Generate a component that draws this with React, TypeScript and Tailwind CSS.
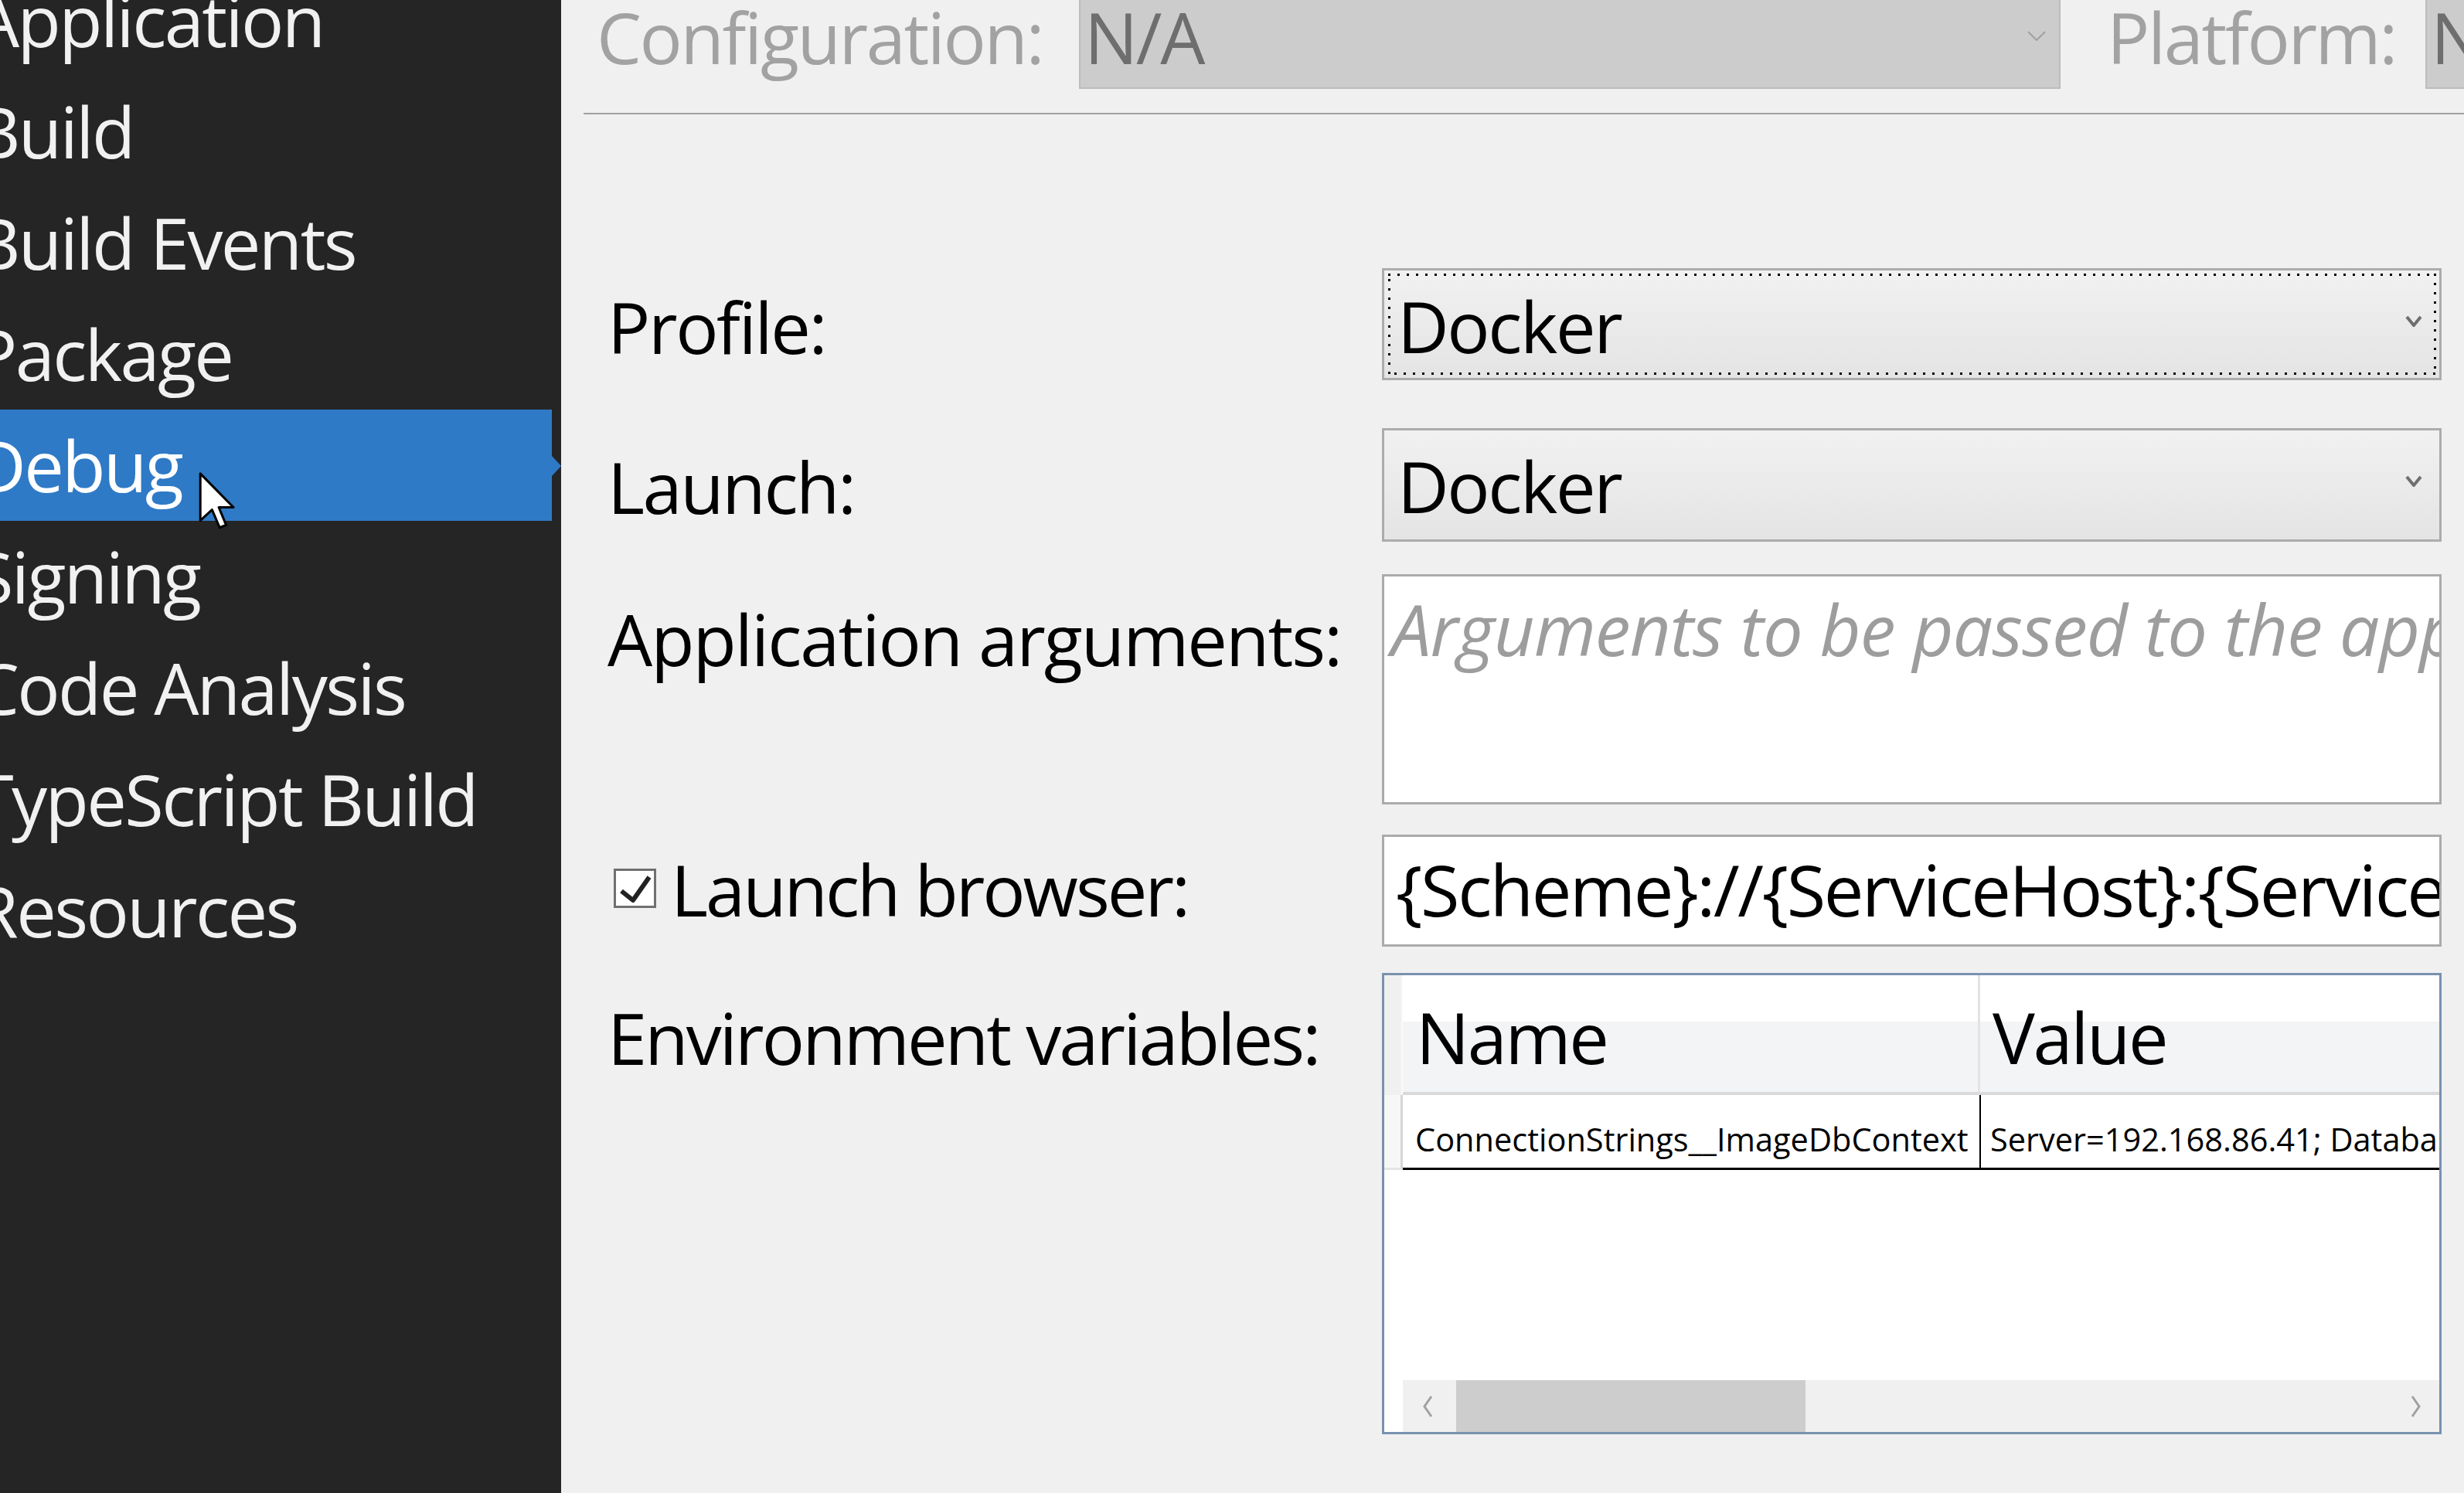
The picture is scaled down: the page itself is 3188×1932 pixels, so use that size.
import React from "react";

const items = [
  "Application",
  "Build",
  "Build Events",
  "Package",
  "Debug",
  "Signing",
  "Code Analysis",
  "TypeScript Build",
  "Resources",
];

function Chevron({
  color = "#707070",
  w = 22,
  h = 15,
  sw = 4,
}: {
  color?: string;
  w?: number;
  h?: number;
  sw?: number;
}) {
  return (
    <svg width={w} height={h} viewBox={`0 0 ${w} ${h}`} className="block shrink-0">
      <polyline
        points={`${sw / 2},${sw / 2} ${w / 2},${h - sw / 2} ${w - sw / 2},${sw / 2}`}
        fill="none"
        stroke={color}
        strokeWidth={sw}
      />
    </svg>
  );
}

function Combo({ text, focused }: { text: string; focused?: boolean }) {
  return (
    <div className="relative h-full border-[3px] border-[#acacac] bg-linear-to-b from-[#f1f1f1] to-[#e4e4e4] flex items-start">
      <div className="pl-[17px] pt-[3px] leading-[138px] whitespace-nowrap">{text}</div>
      <div className="ml-auto mr-[22px] mt-[58px]">
        <Chevron color="#6e6e6e" w={22} h={15} sw={4} />
      </div>
      {focused && (
        <div className="absolute left-[5px] top-[4px] right-[4px] bottom-[4px] pointer-events-none">
          <svg className="block w-full h-full">
            <rect
              x="0"
              y="0"
              width="100%"
              height="100%"
              fill="none"
              stroke="#000"
              strokeWidth="6"
              strokeDasharray="3 9"
            />
          </svg>
        </div>
      )}
    </div>
  );
}

export default function App() {
  return (
    <div className="relative w-[3188px] h-[1932px] overflow-hidden flex bg-[#f0f0f0] font-['Open_Sans','Noto_Sans',sans-serif] text-[92px] tracking-[-2.4px]">
      {/* Sidebar */}
      <aside className="w-[726px] shrink-0 h-full bg-[#252526] overflow-hidden tracking-[-2.6px]">
        <div className="mt-[-46px]">
          {items.map((it) =>
            it === "Debug" ? (
              <div key={it} className="flex h-[144px]">
                <div className="w-[714px] h-full bg-[#2f7ac6] text-white leading-[144px] whitespace-nowrap">
                  <div className="ml-[-33px]">{it}</div>
                </div>
                <svg width="12" height="144" className="block shrink-0">
                  <polygon points="0,60 12,73 0,86" fill="#2f7ac6" />
                </svg>
              </div>
            ) : (
              <div key={it} className="h-[144px] leading-[144px] text-[#f1f1f1] whitespace-nowrap">
                <div className="ml-[-33px]">{it}</div>
              </div>
            )
          )}
        </div>
      </aside>

      {/* Main panel */}
      <main className="flex-1 min-w-0 h-full flex flex-col overflow-hidden text-black">
        {/* Top configuration bar */}
        <div className="flex h-[115px] shrink-0">
          <div className="w-[670px] shrink-0 pl-[46px] leading-[95px] text-[#a2a2a2] whitespace-nowrap">
            Configuration:
          </div>
          <div className="w-[1270px] shrink-0 h-full bg-[#cccccc] border-x-2 border-b-2 border-[#bcbcbc] flex items-start">
            <div className="pl-[5px] leading-[95px] text-[#6e6e6e]">N/A</div>
            <div className="ml-auto mr-[17px] mt-[40px]">
              <Chevron color="#a0a0a0" w={24} h={13} sw={2} />
            </div>
          </div>
          <div className="w-[472px] shrink-0 pl-[60px] leading-[95px] text-[#a2a2a2] whitespace-nowrap">
            Platform:
          </div>
          <div className="flex-1 h-full bg-[#cccccc] border-l-2 border-b-2 border-[#bcbcbc] pl-[5px] leading-[95px] text-[#6e6e6e] whitespace-nowrap overflow-hidden">
            N/A
          </div>
        </div>

        {/* Separator */}
        <div className="ml-[29px] mt-[31px] h-[2px] bg-[#a0a0a0] shrink-0" />

        {/* Form */}
        <div className="pl-[60px] pr-[29px] flex flex-col">
          {/* Profile */}
          <div className="flex mt-[199px] h-[145px]">
            <div className="w-[1002px] shrink-0 leading-[151px] whitespace-nowrap">Profile:</div>
            <div className="flex-1 min-w-0">
              <Combo text="Docker" focused />
            </div>
          </div>

          {/* Launch */}
          <div className="flex mt-[62px] h-[147px]">
            <div className="w-[1002px] shrink-0 leading-[151px] whitespace-nowrap">Launch:</div>
            <div className="flex-1 min-w-0">
              <Combo text="Docker" />
            </div>
          </div>

          {/* Application arguments */}
          <div className="flex mt-[42px] h-[298px]">
            <div className="w-[1002px] shrink-0 leading-[167px] whitespace-nowrap tracking-[-2px]">
              Application arguments:
            </div>
            <div className="flex-1 min-w-0 h-full border-[3px] border-[#ababab] bg-white overflow-hidden">
              <div className="pl-[9px] leading-[135px] italic tracking-[-1px] text-[#9d9d9d] whitespace-nowrap">
                Arguments to be passed to the application
              </div>
            </div>
          </div>

          {/* Launch browser */}
          <div className="flex mt-[39px] h-[145px]">
            <div className="w-[1002px] shrink-0 flex items-start whitespace-nowrap">
              <div className="ml-[8px] mt-[44px] w-[55px] h-[51px] shrink-0 border-[3px] border-[#707070] bg-white">
                <svg width="49" height="45" viewBox="0 0 49 45" className="block">
                  <polyline
                    points="7,26 22,38 43,8"
                    fill="none"
                    stroke="#222"
                    strokeWidth="6"
                    strokeLinejoin="round"
                  />
                </svg>
              </div>
              <div className="ml-[19px] leading-[141px] tracking-[-3px]">Launch browser:</div>
            </div>
            <div className="flex-1 min-w-0 h-full border-[3px] border-[#ababab] bg-white overflow-hidden">
              <div className="pl-[15px] leading-[135px] whitespace-nowrap">
                {"{Scheme}://{ServiceHost}:{ServicePort}"}
              </div>
            </div>
          </div>

          {/* Environment variables */}
          <div className="flex mt-[34px] h-[597px]">
            <div className="w-[1002px] shrink-0 leading-[167px] whitespace-nowrap tracking-[-2.9px]">
              Environment variables:
            </div>
            <div className="flex-1 min-w-0 h-full border-[3px] border-[#7891ae] bg-white flex flex-col overflow-hidden">
              {/* header */}
              <div className="flex h-[155px] shrink-0">
                <div className="w-[24px] shrink-0 bg-[#f0f0f0] border-r-2 border-[#fafafa]" />
                <div className="w-[747px] shrink-0 border-r-[3px] border-[#e3e3e3] border-b-[4px] border-b-[#d9d9d9] bg-linear-to-b from-white from-40% to-[#f3f4f6] to-40% pl-[17px] pt-[10px] leading-[140px] whitespace-nowrap">
                  Name
                </div>
                <div className="flex-1 min-w-0 border-b-[4px] border-[#d9d9d9] bg-linear-to-b from-white from-40% to-[#f3f4f6] to-40% pl-[16px] pt-[10px] leading-[140px] whitespace-nowrap overflow-hidden">
                  Value
                </div>
              </div>
              {/* data row */}
              <div className="flex h-[97px] shrink-0 text-[41.5px] tracking-[0px]">
                <div className="w-[24px] shrink-0 bg-[#f7f7f7] border-r-[3px] border-[#d6d6d6] border-b-[3px] border-b-[#e4e4e4]" />
                <div className="w-[748px] shrink-0 border-r-2 border-black border-b-[3px] pl-[16px] pt-[22px] leading-[70px] whitespace-nowrap overflow-hidden">
                  ConnectionStrings__ImageDbContext
                </div>
                <div className="flex-1 min-w-0 border-b-[3px] border-black pl-[12px] pt-[22px] leading-[70px] whitespace-nowrap overflow-hidden">
                  Server=192.168.86.41; Database=ImageDb; User=sa; Password=Pass@word
                </div>
              </div>
              <div className="flex-1" />
              {/* horizontal scrollbar */}
              <div className="flex h-[67px] shrink-0">
                <div className="w-[24px] shrink-0 bg-white" />
                <div className="flex-1 min-w-0 bg-[#f0f0f0] flex items-stretch">
                  <div className="w-[69px] shrink-0 flex items-center pl-[25px]">
                    <svg width="14" height="28" viewBox="0 0 14 28" className="block">
                      <polyline points="12,1 3,14 12,27" fill="none" stroke="#a0a0a0" strokeWidth="3" />
                    </svg>
                  </div>
                  <div className="w-[452px] shrink-0 bg-[#cdcdcd]" />
                  <div className="flex-1" />
                  <div className="flex items-center pr-[23px]">
                    <svg width="14" height="28" viewBox="0 0 14 28" className="block">
                      <polyline points="2,1 11,14 2,27" fill="none" stroke="#a0a0a0" strokeWidth="3" />
                    </svg>
                  </div>
                </div>
              </div>
            </div>
          </div>
        </div>
      </main>

      {/* Mouse cursor */}
      <svg
        width="50"
        height="74"
        viewBox="-0.5 -0.5 12.5 19.5"
        className="absolute left-[256px] top-[611px] pointer-events-none"
      >
        <polygon
          points="0,0 0,16 4,12.3 6.6,18.4 8.8,17.5 6.3,11.5 11.3,11.5"
          fill="#fff"
          stroke="#000"
          strokeWidth="0.8"
          strokeLinejoin="round"
        />
      </svg>
    </div>
  );
}
